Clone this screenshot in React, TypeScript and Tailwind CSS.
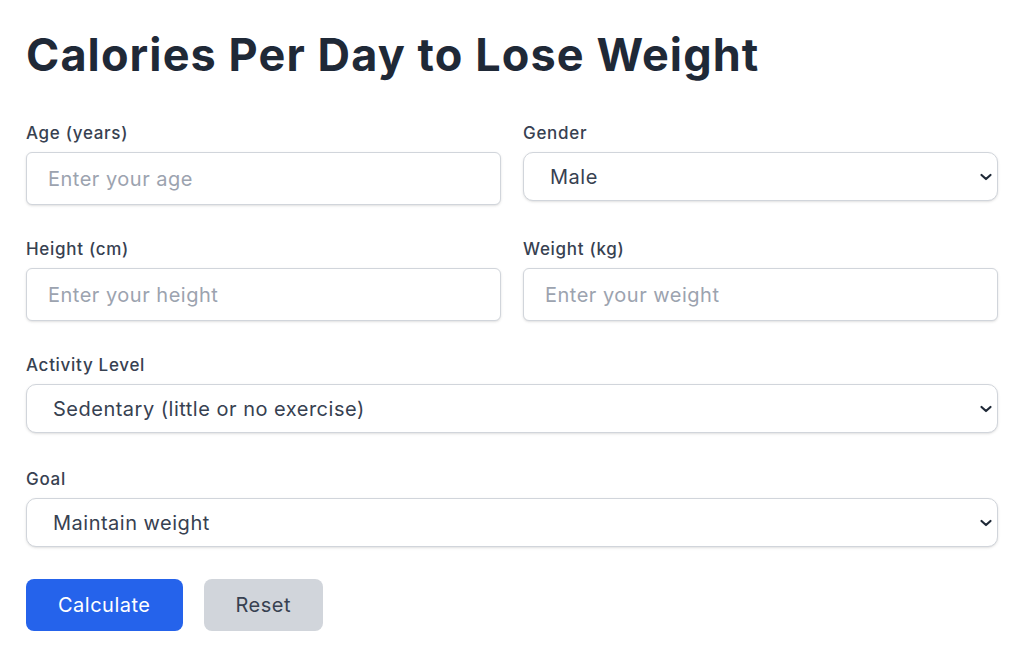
import { useState } from "react";

const inputClass =
  "h-[53px] w-full rounded-md border border-[#d1d5db] bg-white px-[21px] text-[20px] tracking-[0.5px] text-[#374151] shadow-sm placeholder:text-[#9ca3af] focus:outline-none";

const selectClass =
  "h-[49px] w-full appearance-none rounded-[10px] border border-[#d1d5db] bg-white pl-[26px] pr-10 text-[20px] tracking-[0.5px] text-[#374151] shadow-sm focus:outline-none";

function Label({ children }: { children: React.ReactNode }) {
  return (
    <label className="mb-[7px] block text-[17px] leading-6 font-medium tracking-[0.7px] text-[#374151]">
      {children}
    </label>
  );
}

function Chevron() {
  return (
    <svg
      className="pointer-events-none absolute right-[5px] top-1/2 -translate-y-1/2"
      width="14"
      height="10"
      viewBox="0 0 14 10"
      fill="none"
    >
      <path
        d="M2.5 3l4.5 4 4.5-4"
        stroke="#1f2937"
        strokeWidth="2.2"
        strokeLinecap="round"
        strokeLinejoin="round"
      />
    </svg>
  );
}

function Select({ options, value }: { options: string[]; value: string }) {
  const [v, setV] = useState(value);
  return (
    <div className="relative">
      <select className={selectClass} value={v} onChange={(e) => setV(e.target.value)}>
        {options.map((o) => (
          <option key={o}>{o}</option>
        ))}
      </select>
      <Chevron />
    </div>
  );
}

export default function App() {
  return (
    <div
      className="min-h-screen bg-white px-[26px] pt-[26px] pb-6"
      style={{ fontFamily: "Inter, 'Noto Sans', sans-serif" }}
    >
      <h1 className="mb-[37px] text-[45px] leading-[58px] font-bold tracking-[1.1px] text-[#1f2937]">
        Calories Per Day to Lose Weight
      </h1>

      <form className="flex flex-col gap-[32px]" onSubmit={(e) => e.preventDefault()}>
        <div className="grid grid-cols-2 gap-x-[22px] gap-y-[32px]">
          <div>
            <Label>Age (years)</Label>
            <input type="number" placeholder="Enter your age" className={inputClass} />
          </div>
          <div>
            <Label>Gender</Label>
            <Select value="Male" options={["Male", "Female"]} />
          </div>
          <div>
            <Label>Height (cm)</Label>
            <input type="number" placeholder="Enter your height" className={inputClass} />
          </div>
          <div>
            <Label>Weight (kg)</Label>
            <input type="number" placeholder="Enter your weight" className={inputClass} />
          </div>
        </div>

        <div>
          <Label>Activity Level</Label>
          <Select
            value="Sedentary (little or no exercise)"
            options={[
              "Sedentary (little or no exercise)",
              "Lightly active (1-3 days/week)",
              "Moderately active (3-5 days/week)",
              "Very active (6-7 days/week)",
              "Extra active (very hard exercise)",
            ]}
          />
        </div>

        <div className="mt-[2px]">
          <Label>Goal</Label>
          <Select
            value="Maintain weight"
            options={["Maintain weight", "Mild weight loss", "Weight loss", "Extreme weight loss"]}
          />
        </div>

        <div className="flex gap-[21px]">
          <button
            type="submit"
            className="h-[52px] rounded-lg bg-[#2563eb] px-8 text-[20px] tracking-[0.5px] text-white"
          >
            Calculate
          </button>
          <button
            type="reset"
            className="h-[52px] rounded-lg bg-[#d1d5db] px-8 text-[20px] tracking-[0.5px] text-[#374151]"
          >
            Reset
          </button>
        </div>
      </form>
    </div>
  );
}
